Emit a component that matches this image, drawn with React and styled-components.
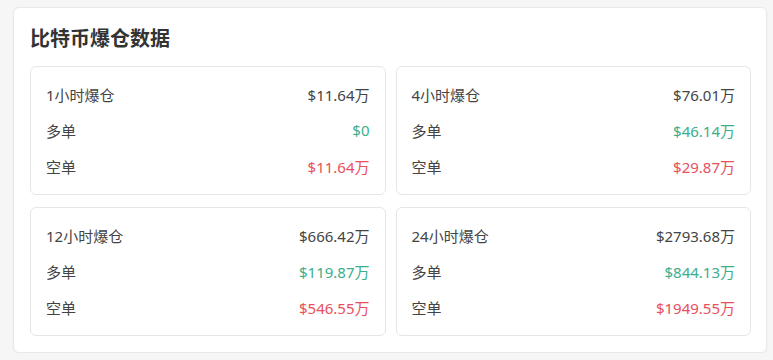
import React from "react";
import styled, { createGlobalStyle } from "styled-components";

const GlobalStyle = createGlobalStyle`
	html, body {
		margin: 0;
		padding: 0;
		background: #f6f6f6;
		font-family: "Noto Sans", "Noto Sans CJK SC", sans-serif;
	}
`;

const Page = styled.div`
	padding: 7px 6px 0 13px;
`;

const Panel = styled.section`
	background: #fff;
	border: 1px solid #e8e8e8;
	border-radius: 6px;
	box-shadow: 0 1px 3px rgba(0, 0, 0, 0.04);
	padding: 17px 15px 15px 16px;
	box-sizing: border-box;
	height: 346px;
`;

const Title = styled.h2`
	margin: 0 0 13px 0;
	font-size: 20px;
	line-height: 28px;
	font-weight: 700;
	color: #333;
`;

const Grid = styled.div`
	display: grid;
	grid-template-columns: 1fr 1fr;
	column-gap: 10px;
	row-gap: 12px;
`;

const StatCard = styled.div`
	border: 1px solid #e6e6e6;
	border-radius: 6px;
	padding: 9px 15px 10px 15px;
`;

const Row = styled.div`
	display: flex;
	justify-content: space-between;
	align-items: center;
	height: 36px;
	font-size: 15px;
	color: #444;
`;

const Value = styled.span`
	color: ${(props) =>
		props.type === "long" ? "#3bae8c" : props.type === "short" ? "#e94f5b" : "#444"};
`;

const data = [
	{ period: "1小时爆仓", total: "$11.64万", long: "$0", short: "$11.64万" },
	{ period: "4小时爆仓", total: "$76.01万", long: "$46.14万", short: "$29.87万" },
	{ period: "12小时爆仓", total: "$666.42万", long: "$119.87万", short: "$546.55万" },
	{ period: "24小时爆仓", total: "$2793.68万", long: "$844.13万", short: "$1949.55万" },
];

export default function App() {
	return (
		<Page>
			<GlobalStyle />
			<Panel>
				<Title>比特币爆仓数据</Title>
				<Grid>
					{data.map((item) => (
						<StatCard key={item.period}>
							<Row>
								<span>{item.period}</span>
								<Value>{item.total}</Value>
							</Row>
							<Row>
								<span>多单</span>
								<Value type="long">{item.long}</Value>
							</Row>
							<Row>
								<span>空单</span>
								<Value type="short">{item.short}</Value>
							</Row>
						</StatCard>
					))}
				</Grid>
			</Panel>
		</Page>
	);
}
